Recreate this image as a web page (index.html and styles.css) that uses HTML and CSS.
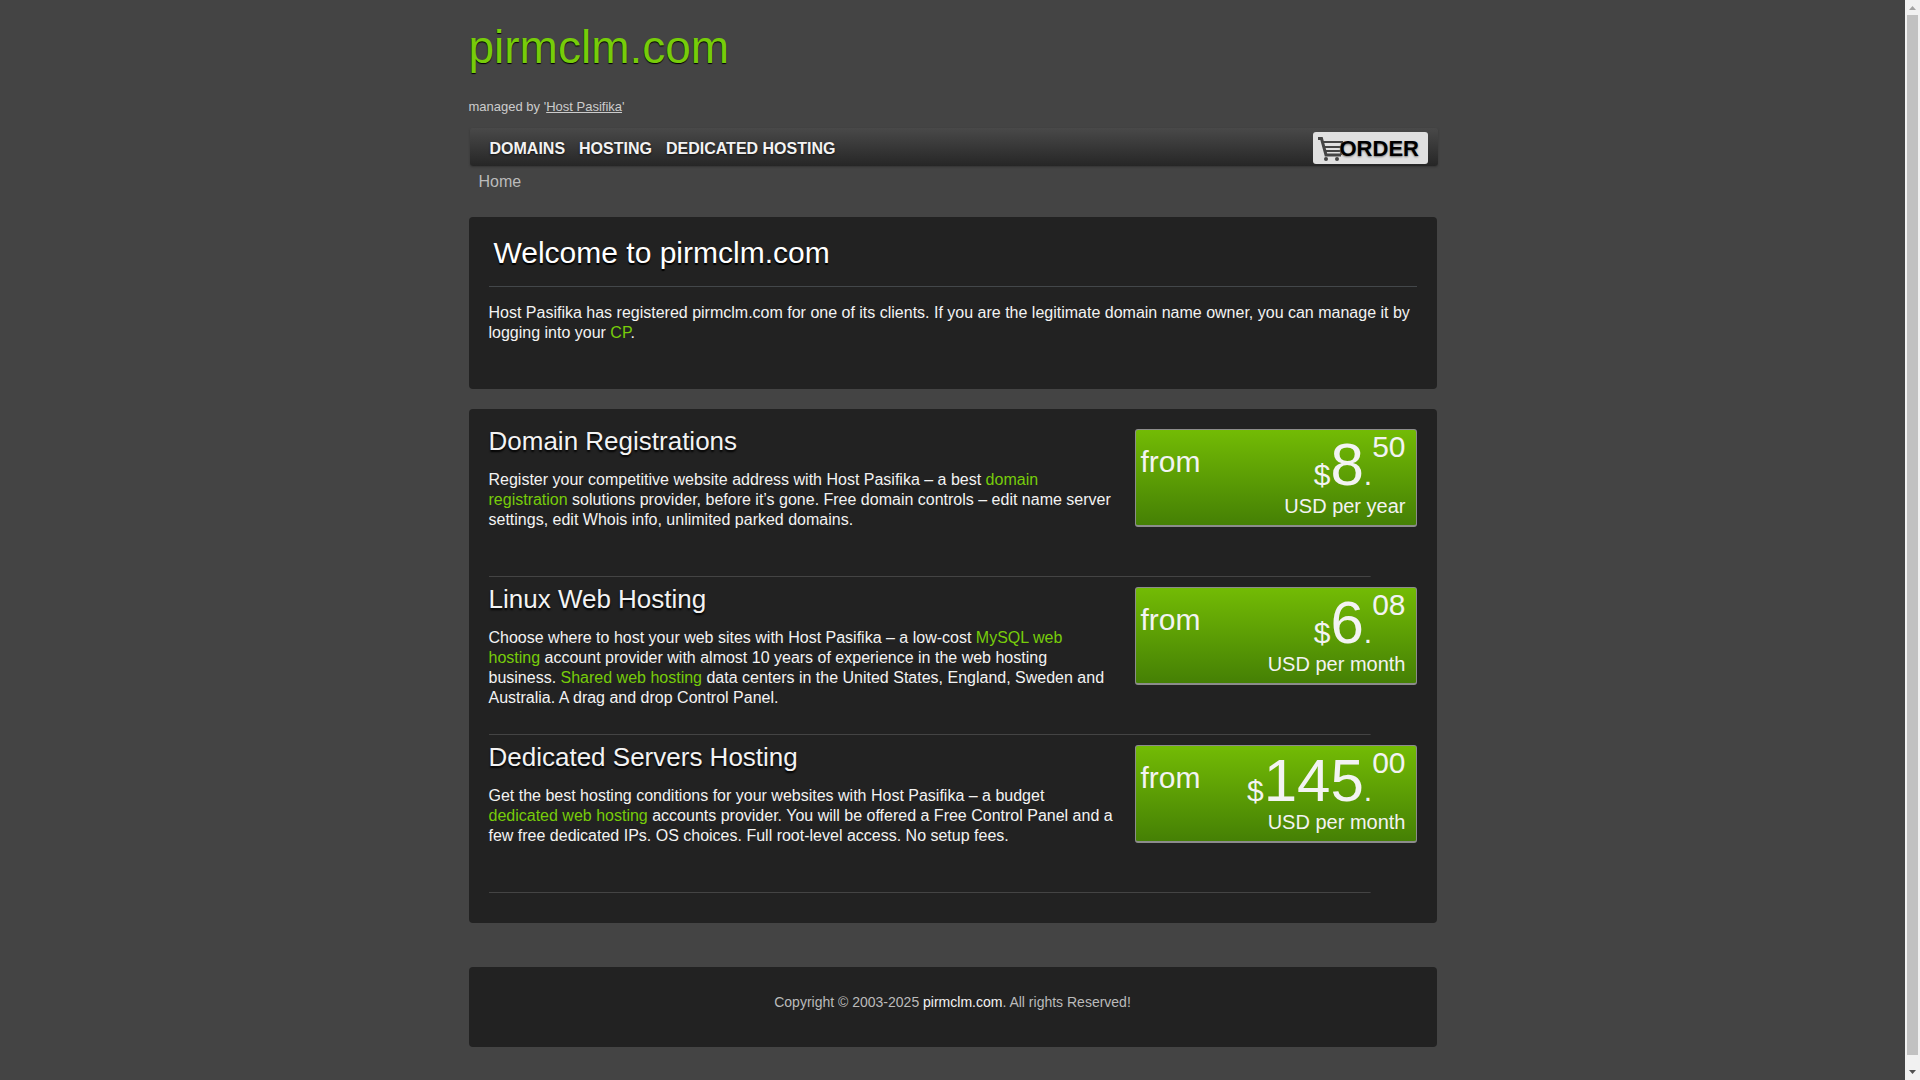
FILE: index.html
```html
<!doctype html>
<html lang="en">
  <head>
    <meta charset="utf-8" />
    <meta name="viewport" content="width=device-width, initial-scale=1" />
    <title>pirmclm.com</title>
    <link rel="stylesheet" href="styles.css">
  </head>
  <body>
    <div class="container">
      <header>
        <a class="logo" href="#">pirmclm.com</a>
        <p class="managed">managed by '<a href="#">Host Pasifika</a>'</p>
      </header>
      <nav>
        <a href="#">DOMAINS</a>
        <a href="#">HOSTING</a>
        <a href="#">DEDICATED HOSTING</a>
        <a class="order" href="#">
          <svg width="26" height="26" viewBox="0 0 26 26" fill="none" stroke="#444" stroke-width="2">
            <path d="M0 2.500h3.500l4.500 16.500h15" stroke-width="3" />
            <path d="M4 6h20l-1 13M6 11h18M7 15h16" />
            <circle cx="8" cy="23" r="2" fill="#444" stroke="none" />
            <circle cx="19" cy="23" r="2" fill="#444" stroke="none" />
          </svg>
          <span>ORDER</span>
        </a>
      </nav>
      <div class="breadcrumb">Home</div>

      <section class="panel welcome">
        <h1>Welcome to pirmclm.com</h1>
        <p>
          Host Pasifika has registered pirmclm.com for one of its clients. If you are the legitimate domain name owner, you can manage it by logging into your <a href="#">CP</a>.
        </p>
      </section>

      <section class="panel plans">
        <article class="plan">
          <div class="info">
            <h2>Domain Registrations</h2>
            <p>
              Register your competitive website address with Host Pasifika – a best <a href="#">domain registration</a> solutions provider, before it’s gone. Free domain controls – edit name server settings, edit Whois info, unlimited parked domains.
            </p>
          </div>
          <div class="price">
            <span class="from">from</span>
            <div class="cost">
              <div class="amount">$<b>8</b>.<span class="cents">50</span></div>
              <div class="period">USD per year</div>
            </div>
          </div>
        </article>
        <article class="plan">
          <div class="info">
            <h2>Linux Web Hosting</h2>
            <p>
              Choose where to host your web sites with Host Pasifika – a low-cost <a href="#">MySQL web hosting</a> account provider with almost 10 years of experience in the web hosting business. <a href="#">Shared web hosting</a> data centers in the United States, England, Sweden and Australia. A drag and drop Control Panel.
            </p>
          </div>
          <div class="price">
            <span class="from">from</span>
            <div class="cost">
              <div class="amount">$<b>6</b>.<span class="cents">08</span></div>
              <div class="period">USD per month</div>
            </div>
          </div>
        </article>
        <article class="plan">
          <div class="info">
            <h2>Dedicated Servers Hosting</h2>
            <p>
              Get the best hosting conditions for your websites with Host Pasifika – a budget <a href="#">dedicated web hosting</a> accounts provider. You will be offered a Free Control Panel and a few free dedicated IPs. OS choices. Full root-level access. No setup fees.
            </p>
          </div>
          <div class="price">
            <span class="from">from</span>
            <div class="cost">
              <div class="amount">$<b>145</b>.<span class="cents">00</span></div>
              <div class="period">USD per month</div>
            </div>
          </div>
        </article>
      </section>

      <footer class="panel">
        Copyright © 2003-2025 <a href="#">pirmclm.com</a>. All rights Reserved!
      </footer>
    </div>

    <div class="scrollbar" aria-hidden="true">
      <svg width="7" height="4" viewBox="0 0 7 4"><path d="M0 4L3.500 0L7 4z" fill="#a3a3a3" /></svg>
      <div class="thumb"></div>
      <svg width="7" height="4" viewBox="0 0 7 4"><path d="M0 0h7L3.500 4z" fill="#505050" /></svg>
    </div>
  </body>
</html>
```
FILE: styles.css
```css
* {
  box-sizing: border-box;
}
body {
  margin: 0;
  padding-right: 15px;
  background: #444;
  color: #f3f3f3;
  font-family: "Liberation Sans", Arial, sans-serif;
  font-size: 16px;
  line-height: 20px;
}
h1,
h2,
p {
  margin: 0;
  font-weight: normal;
}
a {
  color: #77cc0a;
  text-decoration: none;
}
.container {
  max-width: 968px;
  margin: 0 auto;
}
header {
  height: 128px;
  padding-top: 20px;
}
.logo {
  display: block;
  font-size: 46px;
  line-height: 54px;
  text-shadow: 0 1px 1px #000;
}
.managed {
  margin-top: 23px;
  font-size: 13px;
  color: #ccc;
}
.managed a {
  color: #ccc;
  text-decoration: underline;
}
nav {
  display: flex;
  align-items: center;
  gap: 14px;
  height: 38px;
  margin: 0 -1px 0 1px;
  padding: 2px 10px 0 20px;
  border-radius: 3px;
  background: linear-gradient(#494949, #262626);
  box-shadow: 0 1px 2px #333;
}
nav a {
  padding-top: 2px;
  color: #f3f3f3;
  font-weight: bold;
  text-shadow: 0 1px 2px #111;
}
.order {
  display: flex;
  align-items: center;
  width: 115px;
  height: 32px;
  margin-left: auto;
  padding-left: 5px;
  border-radius: 3px;
  background: #e0e0e0;
  color: #000;
  font-size: 22px;
  text-shadow: 0 1px 2px #777;
}
.order svg {
  flex: none;
  margin-right: -4px;
}
.breadcrumb {
  height: 51px;
  padding: 6px 10px;
  color: #bbb;
}
.panel {
  border-radius: 4px;
  background: #222;
}
.welcome {
  min-height: 172px;
  padding: 20px;
}
.welcome h1 {
  padding: 0 5px 17px;
  border-bottom: 1px solid #43474a;
  font-size: 30px;
  line-height: 32px;
  color: #fff;
  text-shadow: 0 2px 1px #000;
}
.welcome p {
  margin-top: 16px;
}
.plans {
  min-height: 514px;
  margin-top: 20px;
  padding: 20px;
}
.plan {
  display: flex;
  justify-content: space-between;
  min-height: 148px;
  margin-bottom: 10px;
  background: linear-gradient(#444, #444) 0 100% / 95% 1px no-repeat;
}
.info {
  width: 626px;
}
.info h2 {
  margin-bottom: 17px;
  font-size: 26px;
  line-height: 24px;
  text-shadow: 0 2px 2px #000;
}
.price {
  display: flex;
  justify-content: space-between;
  width: 282px;
  height: 98px;
  padding: 2px 10px 0 5px;
  border: 1px solid #8c8c8c;
  border-bottom-width: 2px;
  border-radius: 3px;
  background: linear-gradient(#73bb05, #458005);
  font-size: 30px;
}
.from {
  margin-top: 15px;
  line-height: 30px;
}
.amount {
  display: flex;
  justify-content: flex-end;
  align-items: baseline;
  height: 66px;
  line-height: 66px;
}
.amount b {
  font-size: 60px;
  font-weight: normal;
}
.cents {
  align-self: flex-start;
  line-height: 30px;
}
.period {
  font-size: 20px;
  line-height: 16px;
  text-align: right;
}
footer {
  height: 80px;
  margin-top: 44px;
  padding-top: 25px;
  text-align: center;
  font-size: 14px;
  color: #bbb;
}
footer a {
  color: #f3f3f3;
}
.scrollbar {
  position: fixed;
  top: 0;
  right: 0;
  bottom: 0;
  display: flex;
  flex-direction: column;
  align-items: center;
  gap: 5px;
  width: 15px;
  padding: 6px 0;
  background: #f1f1f1;
}
.thumb {
  width: 11px;
  flex: 1;
  margin-bottom: 10px;
  background: #c1c1c1;
}
```
